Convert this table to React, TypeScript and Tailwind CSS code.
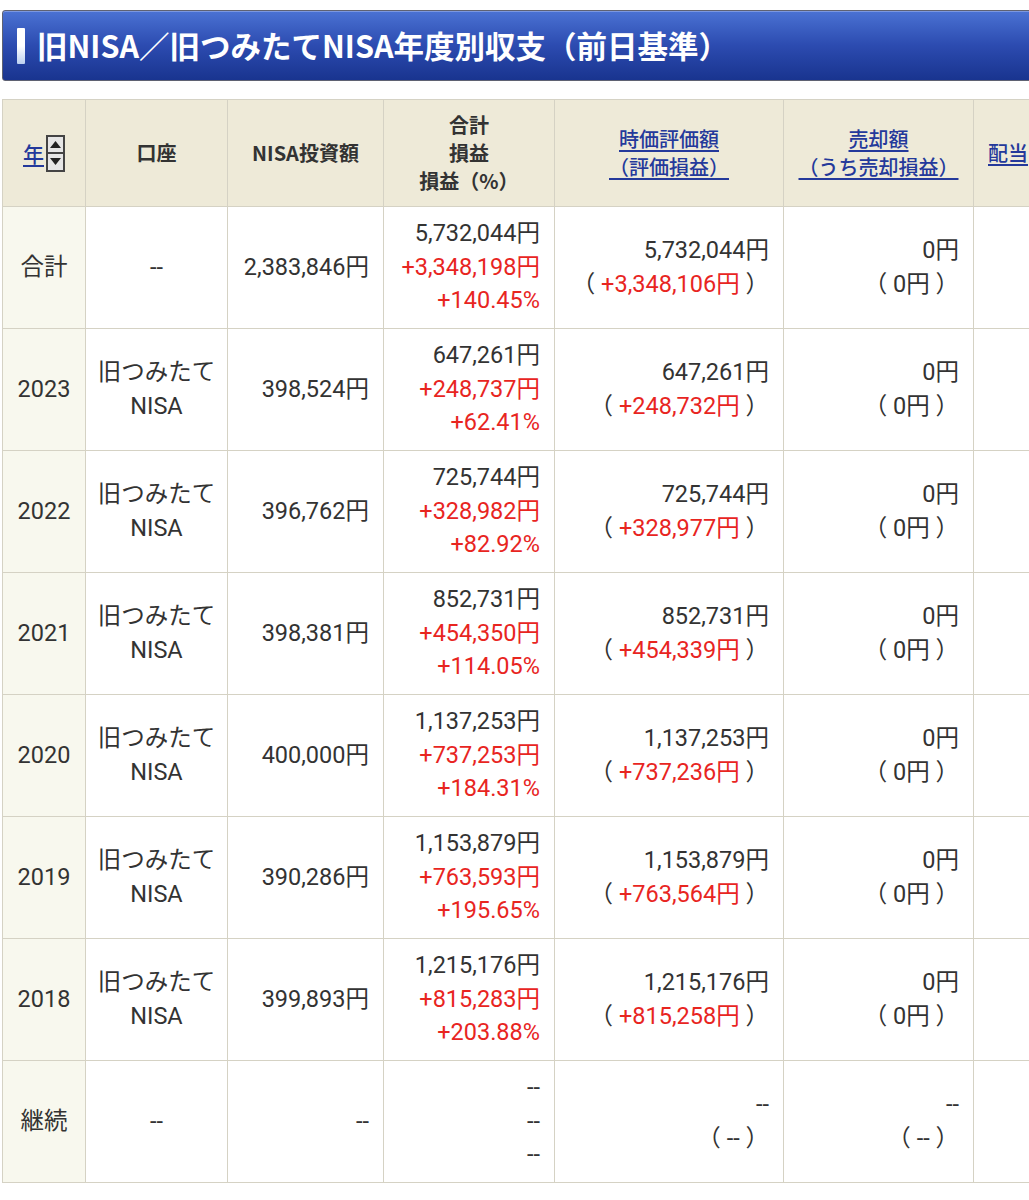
import React from "react";

type Row = {
  year: string;
  account: boolean;
  invest: string;
  total: string;
  pl: string;
  pct: string;
  mv: string;
  mvpl: string;
};

const rows: Row[] = [
  { year: "合計", account: false, invest: "2,383,846円", total: "5,732,044円", pl: "+3,348,198円", pct: "+140.45%", mv: "5,732,044円", mvpl: "+3,348,106円" },
  { year: "2023", account: true, invest: "398,524円", total: "647,261円", pl: "+248,737円", pct: "+62.41%", mv: "647,261円", mvpl: "+248,732円" },
  { year: "2022", account: true, invest: "396,762円", total: "725,744円", pl: "+328,982円", pct: "+82.92%", mv: "725,744円", mvpl: "+328,977円" },
  { year: "2021", account: true, invest: "398,381円", total: "852,731円", pl: "+454,350円", pct: "+114.05%", mv: "852,731円", mvpl: "+454,339円" },
  { year: "2020", account: true, invest: "400,000円", total: "1,137,253円", pl: "+737,253円", pct: "+184.31%", mv: "1,137,253円", mvpl: "+737,236円" },
  { year: "2019", account: true, invest: "390,286円", total: "1,153,879円", pl: "+763,593円", pct: "+195.65%", mv: "1,153,879円", mvpl: "+763,564円" },
  { year: "2018", account: true, invest: "399,893円", total: "1,215,176円", pl: "+815,283円", pct: "+203.88%", mv: "1,215,176円", mvpl: "+815,258円" },
];

const th =
  "border border-[#d5d2c4] bg-[#eeead8] text-center align-middle font-bold text-[20px] leading-[28px] text-[#333333]";
const td = "border border-[#d5d2c4] align-middle text-[23.5px] leading-[33.5px] text-[#333333]";
const red = "text-[#e8251f]";
const link = "text-[#24399b] underline underline-offset-[3px] font-medium";

function SortBox() {
  return (
    <span className="ml-[2px] inline-flex h-[37px] w-[19px] flex-col border-2 border-[#444] bg-[#e6e6e6] align-middle">
      <span className="flex flex-1 items-center justify-center border-b-2 border-[#444]">
        <svg width="11" height="7" viewBox="0 0 11 7">
          <path d="M5.5 0 L11 7 L0 7 Z" fill="#222" />
        </svg>
      </span>
      <span className="flex flex-1 items-center justify-center">
        <svg width="11" height="7" viewBox="0 0 11 7">
          <path d="M0 0 L11 0 L5.5 7 Z" fill="#222" />
        </svg>
      </span>
    </span>
  );
}

export default function App() {
  return (
    <div className="w-[1029px] overflow-hidden bg-white font-['Roboto','Noto_Sans_CJK_JP',sans-serif] pl-[2px] pt-[10px] pb-[20px]">
      <div className="flex h-[71px] w-[1040px] items-center rounded-[3px] border border-[#5f6272] bg-gradient-to-b from-[#4b72d3] via-[#2c4bb0] to-[#19348f] pl-[14px] shadow-[inset_0_1px_0_#7b97e0]">
        <span className="h-[36px] w-[8px] rounded-[1px] bg-gradient-to-b from-white via-white to-[#bcd0f0]" />
        <span className="ml-[12px] font-['Noto_Sans_CJK_JP',sans-serif] text-[30.5px] font-bold leading-none text-white">
          旧NISA／旧つみたてNISA年度別収支（前日基準）
        </span>
      </div>

      <table className="mt-[18px] w-[1140px] table-fixed border-collapse">
        <colgroup>
          <col className="w-[83px]" />
          <col className="w-[142px]" />
          <col className="w-[156px]" />
          <col className="w-[171px]" />
          <col className="w-[229px]" />
          <col className="w-[190px]" />
          <col className="w-[169px]" />
        </colgroup>
        <thead className="font-['Noto_Sans_CJK_JP',sans-serif]">
          <tr className="h-[107px]">
            <th className={th}>
              <span className="inline-flex items-center">
                <span className={`${link} text-[21px]`}>年</span>
                <SortBox />
              </span>
            </th>
            <th className={th}>口座</th>
            <th className={th}>NISA投資額</th>
            <th className={th}>
              合計
              <br />
              損益
              <br />
              損益（%）
            </th>
            <th className={th}>
              <span className={link}>
                時価評価額
                <br />
                （評価損益）
              </span>
            </th>
            <th className={th}>
              <span className={link}>
                売却額
                <br />
                （うち売却損益）
              </span>
            </th>
            <th className={`${th} text-left pl-[14px]`}>
              <span className={link}>配当</span>
            </th>
          </tr>
        </thead>
        <tbody>
          {rows.map((r) => (
            <tr key={r.year} className="h-[122px]">
              <td className={`${td} bg-[#f8f8ee] text-center`}>{r.year}</td>
              <td className={`${td} text-center`}>
                {r.account ? (
                  <>
                    旧つみたて
                    <br />
                    NISA
                  </>
                ) : (
                  "--"
                )}
              </td>
              <td className={`${td} pr-[14px] text-right`}>{r.invest}</td>
              <td className={`${td} pr-[14px] text-right`}>
                <div>{r.total}</div>
                <div className={red}>{r.pl}</div>
                <div className={red}>{r.pct}</div>
              </td>
              <td className={`${td} pr-[14px] text-right`}>
                <div>{r.mv}</div>
                <div>
                  （ <span className={red}>{r.mvpl}</span> ）
                </div>
              </td>
              <td className={`${td} pr-[14px] text-right`}>
                <div>0円</div>
                <div>（ 0円 ）</div>
              </td>
              <td className={td} />
            </tr>
          ))}
          <tr className="h-[122px]">
            <td className={`${td} bg-[#f8f8ee] text-center`}>継続</td>
            <td className={`${td} text-center`}>--</td>
            <td className={`${td} pr-[14px] text-right`}>--</td>
            <td className={`${td} pr-[14px] text-right`}>
              <div>--</div>
              <div>--</div>
              <div>--</div>
            </td>
            <td className={`${td} pr-[14px] text-right`}>
              <div>--</div>
              <div>（ -- ）</div>
            </td>
            <td className={`${td} pr-[14px] text-right`}>
              <div>--</div>
              <div>（ -- ）</div>
            </td>
            <td className={td} />
          </tr>
        </tbody>
      </table>
    </div>
  );
}
